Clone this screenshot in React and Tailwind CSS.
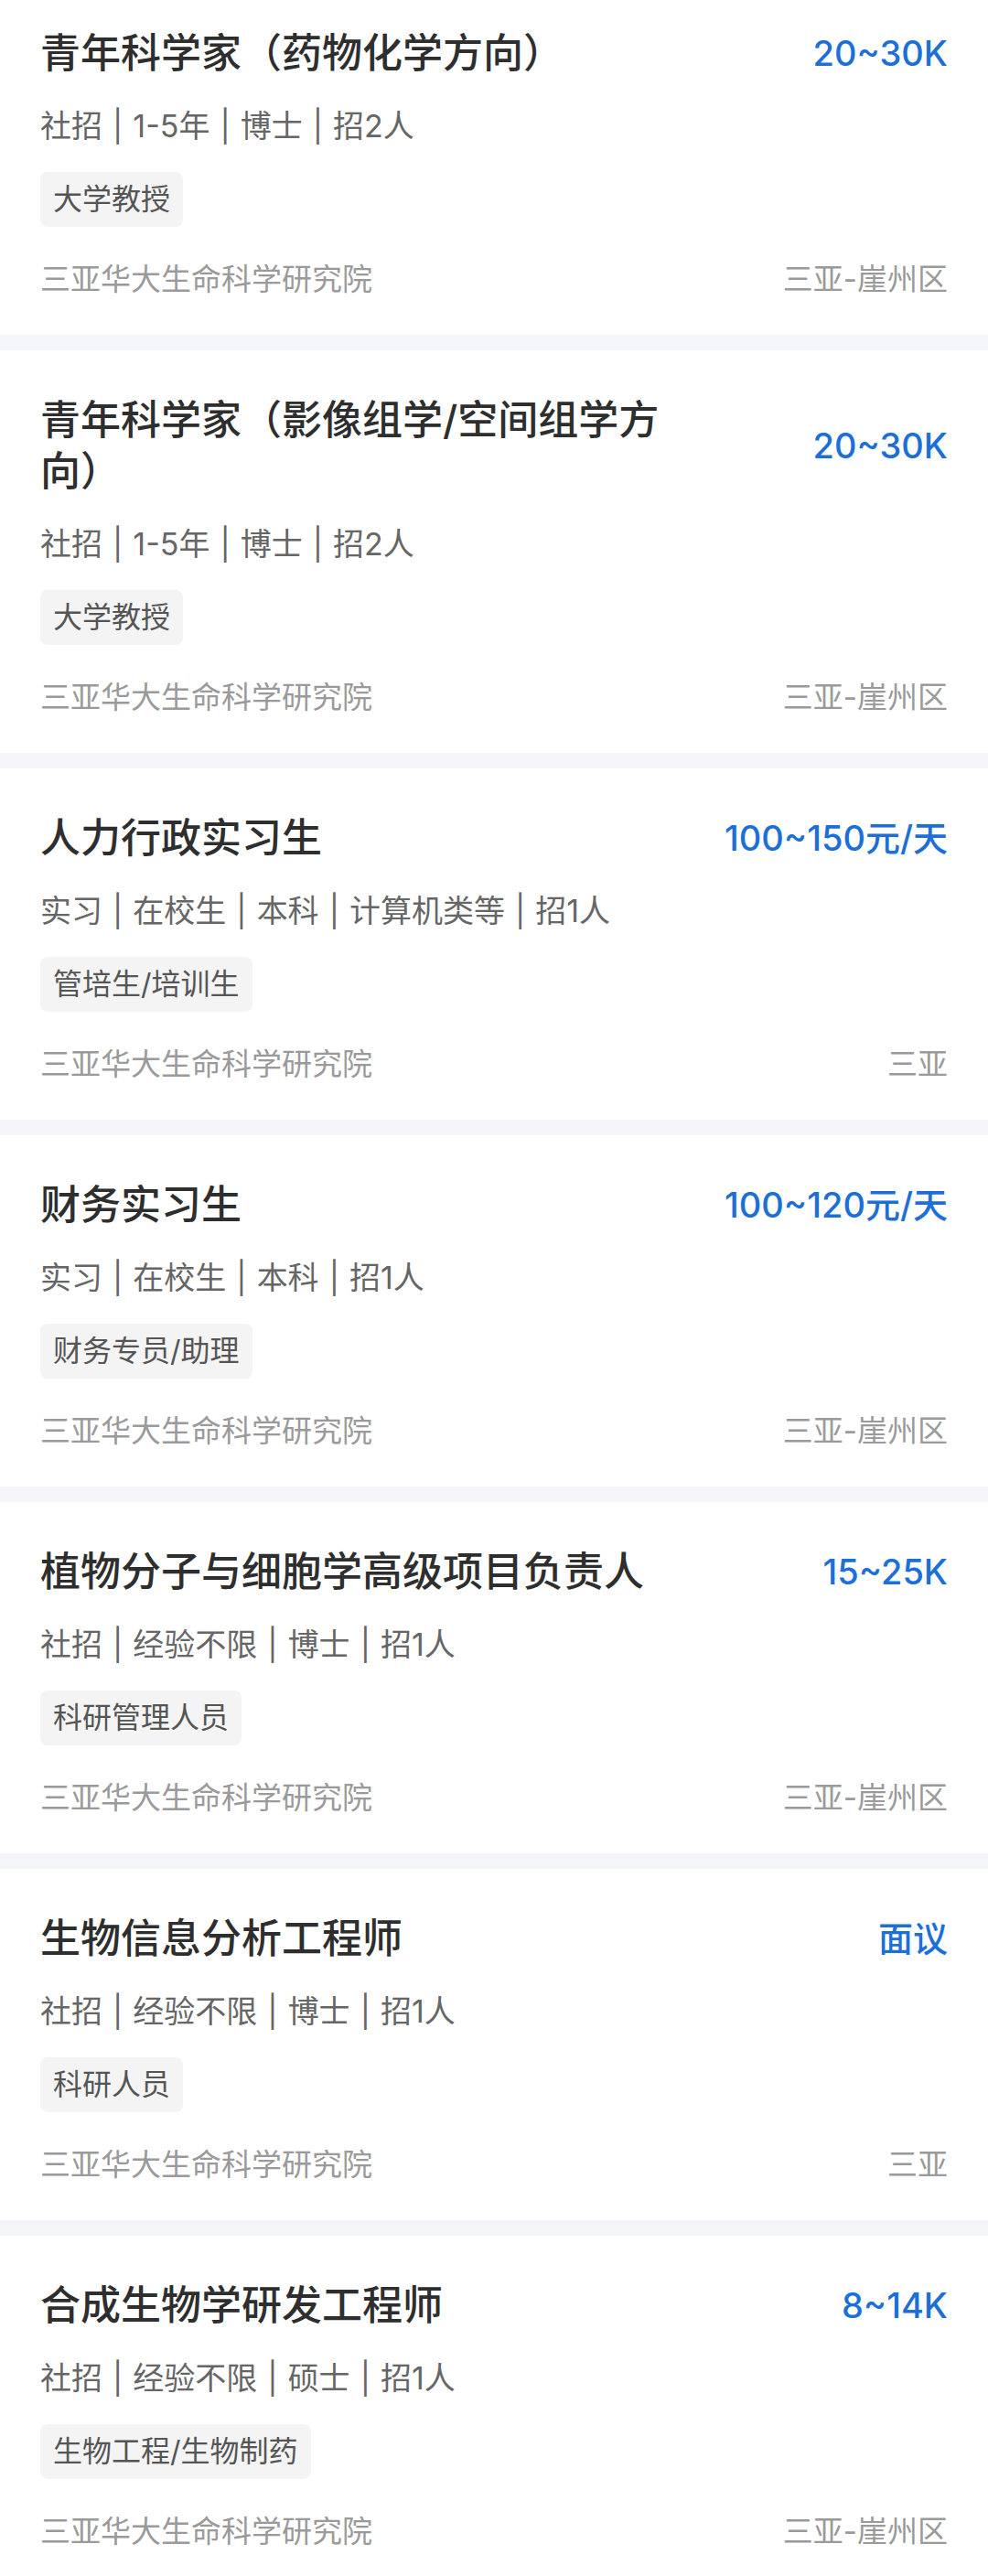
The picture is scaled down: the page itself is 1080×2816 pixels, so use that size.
const jobs = [
  {
    title: "青年科学家（药物化学方向）",
    salary: "20~30K",
    meta: ["社招", "1-5年", "博士", "招2人"],
    tag: "大学教授",
    place: "三亚-崖州区",
  },
  {
    title: "青年科学家（影像组学/空间组学方向）",
    salary: "20~30K",
    meta: ["社招", "1-5年", "博士", "招2人"],
    tag: "大学教授",
    place: "三亚-崖州区",
  },
  {
    title: "人力行政实习生",
    salary: "100~150元/天",
    meta: ["实习", "在校生", "本科", "计算机类等", "招1人"],
    tag: "管培生/培训生",
    place: "三亚",
  },
  {
    title: "财务实习生",
    salary: "100~120元/天",
    meta: ["实习", "在校生", "本科", "招1人"],
    tag: "财务专员/助理",
    place: "三亚-崖州区",
  },
  {
    title: "植物分子与细胞学高级项目负责人",
    salary: "15~25K",
    meta: ["社招", "经验不限", "博士", "招1人"],
    tag: "科研管理人员",
    place: "三亚-崖州区",
  },
  {
    title: "生物信息分析工程师",
    salary: "面议",
    meta: ["社招", "经验不限", "博士", "招1人"],
    tag: "科研人员",
    place: "三亚",
  },
  {
    title: "合成生物学研发工程师",
    salary: "8~14K",
    meta: ["社招", "经验不限", "硕士", "招1人"],
    tag: "生物工程/生物制药",
    place: "三亚-崖州区",
  },
];

function JobCard({ job }) {
  return (
    <div className="bg-white px-[44px] pt-[48px] pb-[39px]">
      <div className="flex items-center justify-between">
        <h3 className="max-w-[700px] text-[44px] leading-[56px] font-medium text-[#2e2e2e]">
          {job.title}
        </h3>
        <span className="shrink-0 text-[38px] leading-[56px] font-medium text-[#1d6fd8]">
          {job.salary}
        </span>
      </div>
      <p className="mt-[30px] flex items-center text-[34px] leading-[44px] text-[#666]">
        {job.meta.map((m, i) => (
          <span key={i} className="flex items-center">
            {i > 0 && <span className="mx-[11px]">|</span>}
            {m}
          </span>
        ))}
      </p>
      <div className="mt-[28px] flex">
        <span className="h-[60px] rounded-[8px] bg-[#f4f4f4] px-[14px] text-[32px] leading-[60px] text-[#555]">
          {job.tag}
        </span>
      </div>
      <div className="mt-[35px] flex items-center justify-between text-[33px] leading-[44px] text-[#9a9a9a]">
        <span>三亚华大生命科学研究院</span>
        <span>{job.place}</span>
      </div>
    </div>
  );
}

export default function App() {
  return (
    <div
      className="min-h-screen overflow-hidden bg-white"
      style={{ fontFamily: 'Inter, "Noto Sans CJK SC", sans-serif' }}
    >
      <div className="-mt-[18px] flex flex-col gap-[17px] bg-[#f4f5f8]">
        {jobs.map((job, i) => (
          <JobCard key={i} job={job} />
        ))}
      </div>
    </div>
  );
}
